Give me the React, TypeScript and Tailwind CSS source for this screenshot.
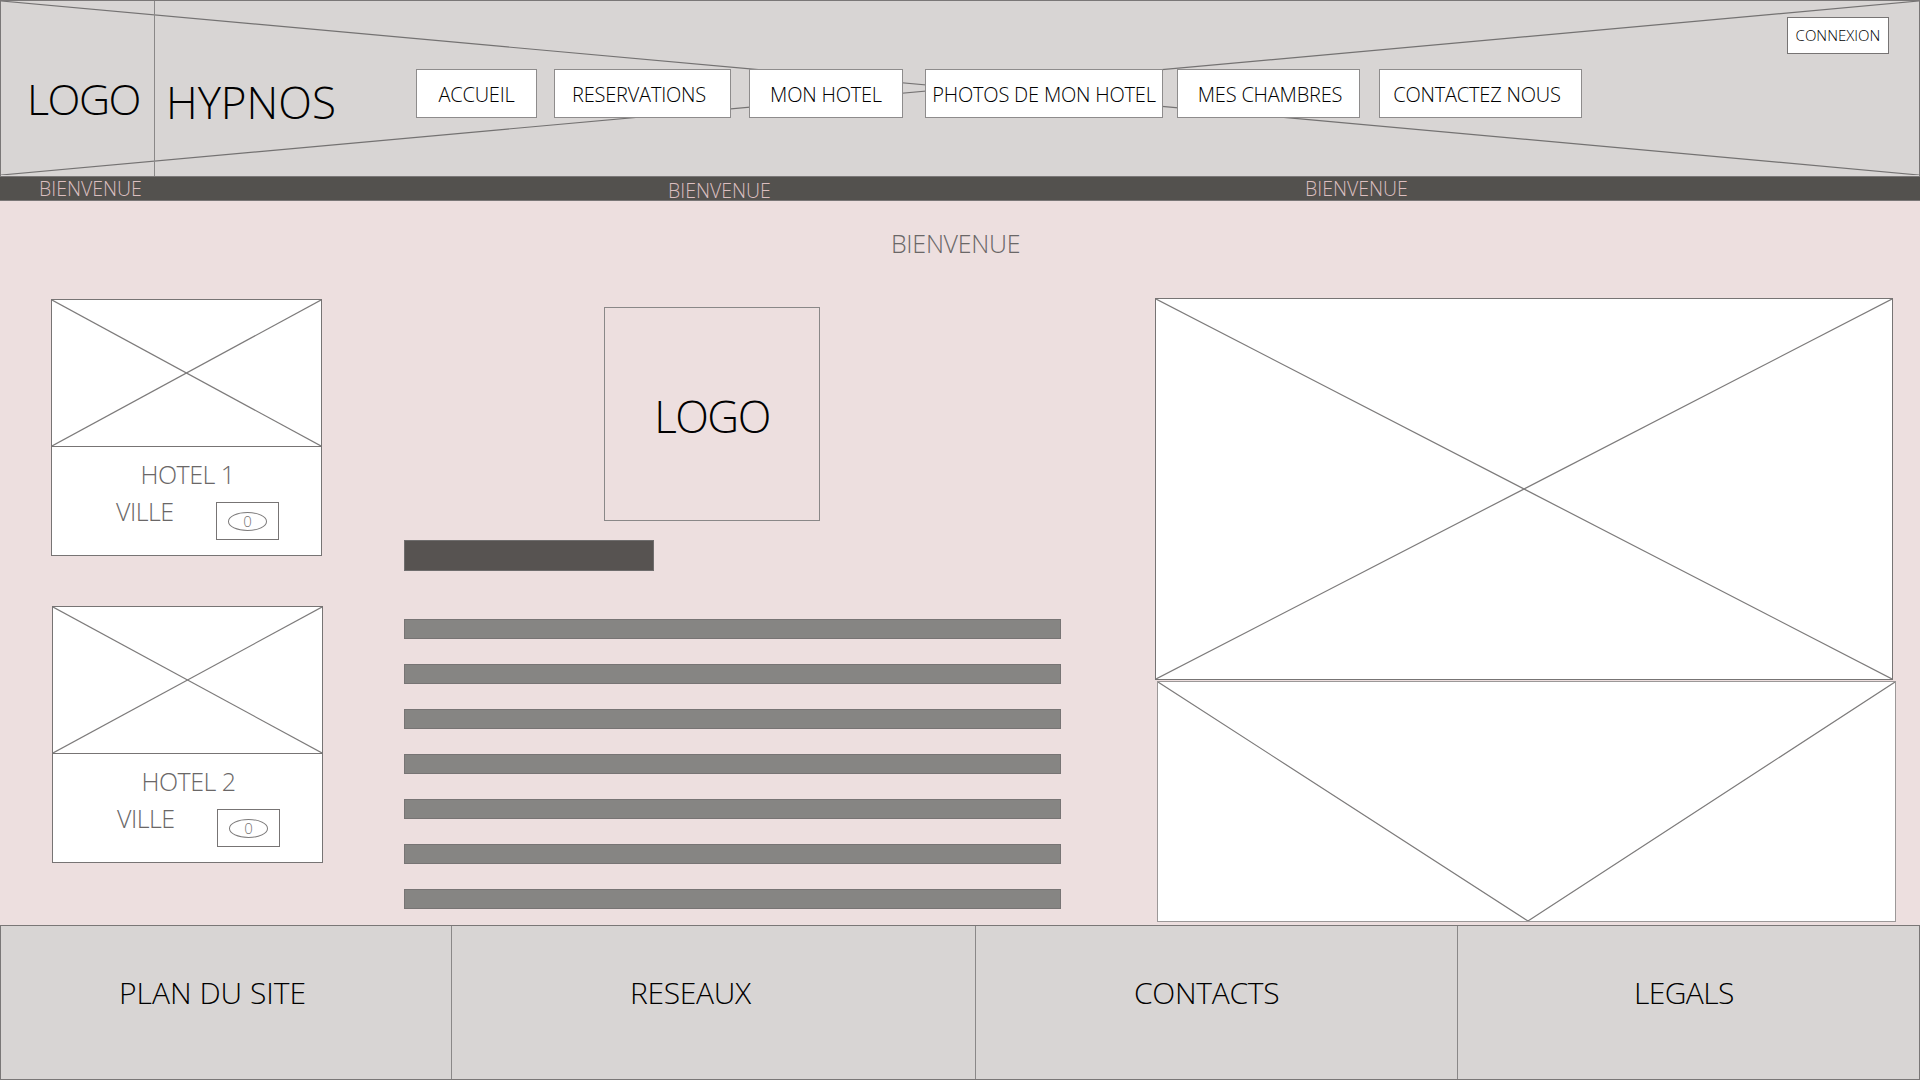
const NAV_ITEMS = [
  { label: "ACCUEIL", box: "ml-[80px] w-[121px]" },
  { label: "RESERVATIONS", box: "ml-[17px] w-[177px] pr-[7px]" },
  { label: "MON HOTEL", box: "ml-[18px] w-[154px]" },
  { label: "PHOTOS DE MON HOTEL", box: "ml-[22px] w-[238px]" },
  { label: "MES CHAMBRES", box: "ml-[14px] w-[183px] pl-[3px]" },
  { label: "CONTACTEZ NOUS", box: "ml-[19px] w-[203px] pr-[7px]" },
];

const FOOTER_CELLS = [
  { label: "PLAN DU SITE", box: "w-[451px] pl-[118px] tracking-[0px]" },
  { label: "RESEAUX", box: "w-[524px] pl-[178px]" },
  { label: "CONTACTS", box: "w-[482px] pl-[158px]" },
  { label: "LEGALS", box: "flex-1 pl-[176px] tracking-[-0.6px]" },
];

function CrossLines({ className = "stroke-[#7d7b7b]", frame = "h-full" }: { className?: string; frame?: string }) {
  return (
    <svg className={`absolute inset-x-0 top-0 w-full ${frame}`} viewBox="0 0 100 100" preserveAspectRatio="none">
      <line x1="0" y1="0" x2="100" y2="100" className={className} strokeWidth="1.2" vectorEffect="non-scaling-stroke" />
      <line x1="100" y1="0" x2="0" y2="100" className={className} strokeWidth="1.2" vectorEffect="non-scaling-stroke" />
    </svg>
  );
}

function HotelCard({ name, className }: { name: string; className: string }) {
  return (
    <div className={`flex h-[257px] w-[271px] flex-col border border-[#777474] bg-white ${className}`}>
      <div className="relative h-[147px] shrink-0 border-b border-[#777474]">
        <CrossLines />
      </div>
      <p className="mt-[10px] pl-[2px] text-center text-[25px] tracking-[-0.5px] leading-[34px] text-[#6a6767]">{name}</p>
      <div className="mt-[3px] flex items-start">
        <span className="ml-[64px] w-[67px] text-[25px] tracking-[-0.5px] leading-[34px] text-[#6a6767]">VILLE</span>
        <div className="ml-[33px] mt-[8px] flex h-[38px] w-[63px] items-center justify-center border border-[#777474]">
          <div className="flex h-[19px] w-[39px] items-center justify-center rounded-[50%] border border-[#7d7b7b] text-[15px] leading-none text-[#777474]">
            0
          </div>
        </div>
      </div>
    </div>
  );
}

export default function App() {
  return (
    <div className="flex h-[1080px] w-[1920px] flex-col overflow-hidden bg-[#eddfdf] font-['Open_Sans',sans-serif] font-light">
      {/* Header */}
      <header className="relative flex h-[177px] shrink-0 items-start border border-[#7a7777] bg-[#d8d5d4]">
        <CrossLines className="stroke-[#747272]" frame="h-[174px]" />
        <div className="relative h-full w-[154px] shrink-0 border-r border-[#8a8888] pl-[26px] pt-[68px] text-[43px] tracking-[-1.5px] leading-[60px] text-black">
          LOGO
        </div>
        <div className="relative ml-[11px] w-[170px] shrink-0 pt-[71px] text-[44px] leading-[60px] text-black">HYPNOS</div>
        <nav className="relative flex pt-[68px]">
          {NAV_ITEMS.map((item) => (
            <a
              key={item.label}
              className={`flex h-[49px] shrink-0 items-center justify-center border border-[#8e8c8c] bg-white pt-[2px] text-[20px] tracking-[-0.2px] text-black ${item.box}`}
            >
              {item.label}
            </a>
          ))}
        </nav>
        <a className="relative ml-auto mr-[30px] mt-[16px] flex h-[37px] w-[102px] items-center justify-center border border-[#777474] bg-white text-[15px] text-black">
          CONNEXION
        </a>
      </header>

      {/* Bandeau */}
      <div className="flex h-[24px] shrink-0 items-start border-b border-[#7a7777] bg-[#53514e] text-[19.5px] leading-[23px] text-[#dcbfc0]">
        <span className="ml-[39px] w-[102px]">BIENVENUE</span>
        <span className="ml-[527px] mt-[2px] w-[102px]">BIENVENUE</span>
        <span className="ml-[535px] w-[102px]">BIENVENUE</span>
      </div>

      {/* Contenu */}
      <main className="flex h-[724px] shrink-0 flex-col">
        <h1 className="h-[97px] pl-[891px] pt-[25px] text-[25px] font-light tracking-[-0.3px] leading-[34px] text-[#6a6767]">BIENVENUE</h1>
        <div className="flex flex-1">
          <div className="ml-[51px] w-[272px] shrink-0 pt-px">
            <HotelCard name="HOTEL 1" className="" />
            <HotelCard name="HOTEL 2" className="ml-px mt-[50px]" />
          </div>

          <div className="ml-[81px] w-[657px] shrink-0 pt-[9px]">
            <div className="ml-[200px] flex h-[214px] w-[216px] items-center justify-center border border-[#8a8888] pt-[4px] text-[44px] tracking-[-1.5px] text-black">
              LOGO
            </div>
            <div className="mt-[19px] h-[31px] w-[250px] border border-[#6f6d6d] bg-[#575351]" />
            <div className="mt-[48px] flex flex-col gap-[25px]">
              {[0, 1, 2, 3, 4, 5, 6].map((i) => (
                <div key={i} className="h-[20px] border border-[#777474] bg-[#868583]" />
              ))}
            </div>
          </div>

          <div className="ml-[94px] w-[741px] shrink-0">
            <div className="relative h-[382px] w-[738px] border border-[#777474] bg-white">
              <CrossLines />
            </div>
            <div className="relative ml-[2px] mt-px h-[241px] w-[739px] border border-[#9c9898] bg-white">
              <svg className="absolute inset-0 h-full w-full" viewBox="0 0 100 100" preserveAspectRatio="none">
                <polyline points="0,0 50.2,100 100,0" fill="none" className="stroke-[#7d7b7b]" strokeWidth="1.2" vectorEffect="non-scaling-stroke" />
              </svg>
            </div>
          </div>
        </div>
      </main>

      {/* Pied de page */}
      <footer className="flex h-[155px] shrink-0 border border-[#7a7777] bg-[#d8d5d4] text-[30px] tracking-[-0.3px] text-black">
        {FOOTER_CELLS.map((cell) => (
          <div key={cell.label} className={`flex items-center border-r border-[#8a8888] pb-[20px] last:border-r-0 ${cell.box}`}>
            {cell.label}
          </div>
        ))}
      </footer>
    </div>
  );
}
